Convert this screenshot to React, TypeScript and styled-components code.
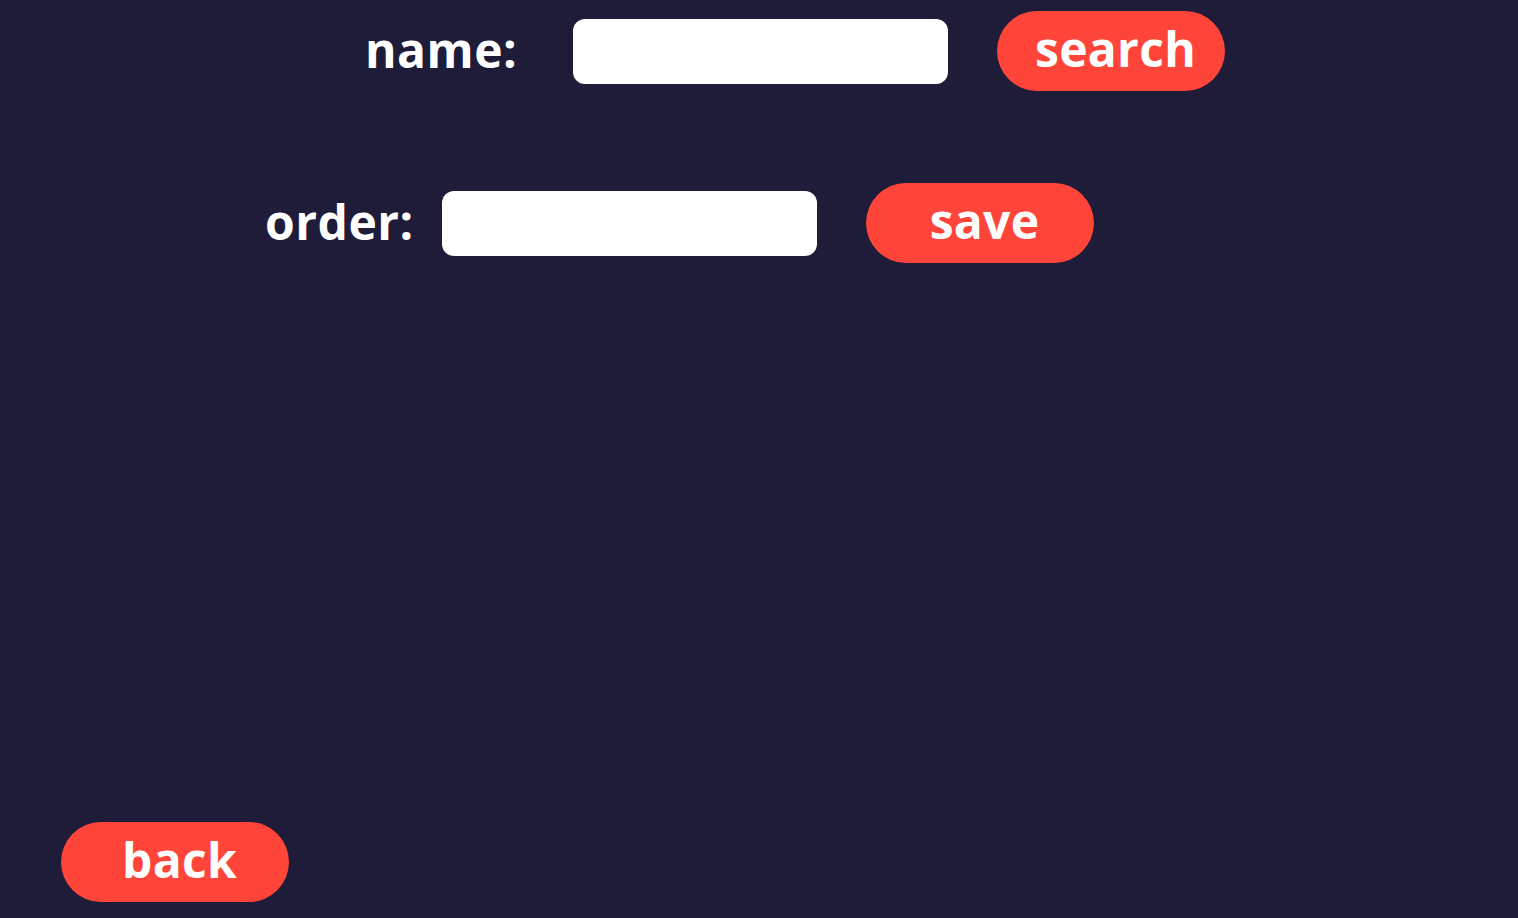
import React from "react";
import styled, { createGlobalStyle } from "styled-components";

const GlobalStyle = createGlobalStyle`
  html, body { margin: 0; padding: 0; background: #1e1c39; }
  body { font-family: "Open Sans", "Liberation Sans", sans-serif; }
`;

const Page = styled.div`
  box-sizing: border-box;
  min-height: 100vh;
  height: 918px;
  display: flex;
  flex-direction: column;
  padding: 11px 0 16px 0;
  background: #1e1c39;
  overflow: hidden;
`;

const Row = styled.div<{ $left: number; $top: number }>`
  display: flex;
  align-items: center;
  padding-left: ${(p) => p.$left}px;
  margin-top: ${(p) => p.$top}px;
  height: 80px;
`;

const Label = styled.label<{ $gap: number }>`
  color: #ffffff;
  font-weight: 700;
  font-size: 48px;
  letter-spacing: 0.5px;
  width: 153px;
  margin-right: ${(p) => p.$gap}px;
  white-space: nowrap;
  line-height: 1;
  margin-top: -2px;
`;

const Field = styled.div`
  width: 375px;
  height: 65px;
  background: #ffffff;
  border-radius: 12px;
  margin-right: 49px;
`;

const Button = styled.button`
  width: 228px;
  height: 80px;
  border: none;
  border-radius: 40px;
  background: #ff4539;
  color: #ffffff;
  font-family: "Open Sans", "Liberation Sans", sans-serif;
  font-weight: 700;
  font-size: 48px;
  line-height: 1;
  letter-spacing: 0.3px;
  padding: 0 0 4px 9px;
  cursor: pointer;
`;

const Footer = styled.div`
  margin-top: auto;
  padding-left: 61px;
`;

export default function App() {
  return (
    <>
      <GlobalStyle />
      <Page>
        <Row $left={365} $top={0}>
          <Label $gap={55}>name:</Label>
          <Field />
          <Button>search</Button>
        </Row>
        <Row $left={265} $top={92}>
          <Label $gap={24}>order:</Label>
          <Field />
          <Button>save</Button>
        </Row>
        <Footer>
          <Button>back</Button>
        </Footer>
      </Page>
    </>
  );
}
